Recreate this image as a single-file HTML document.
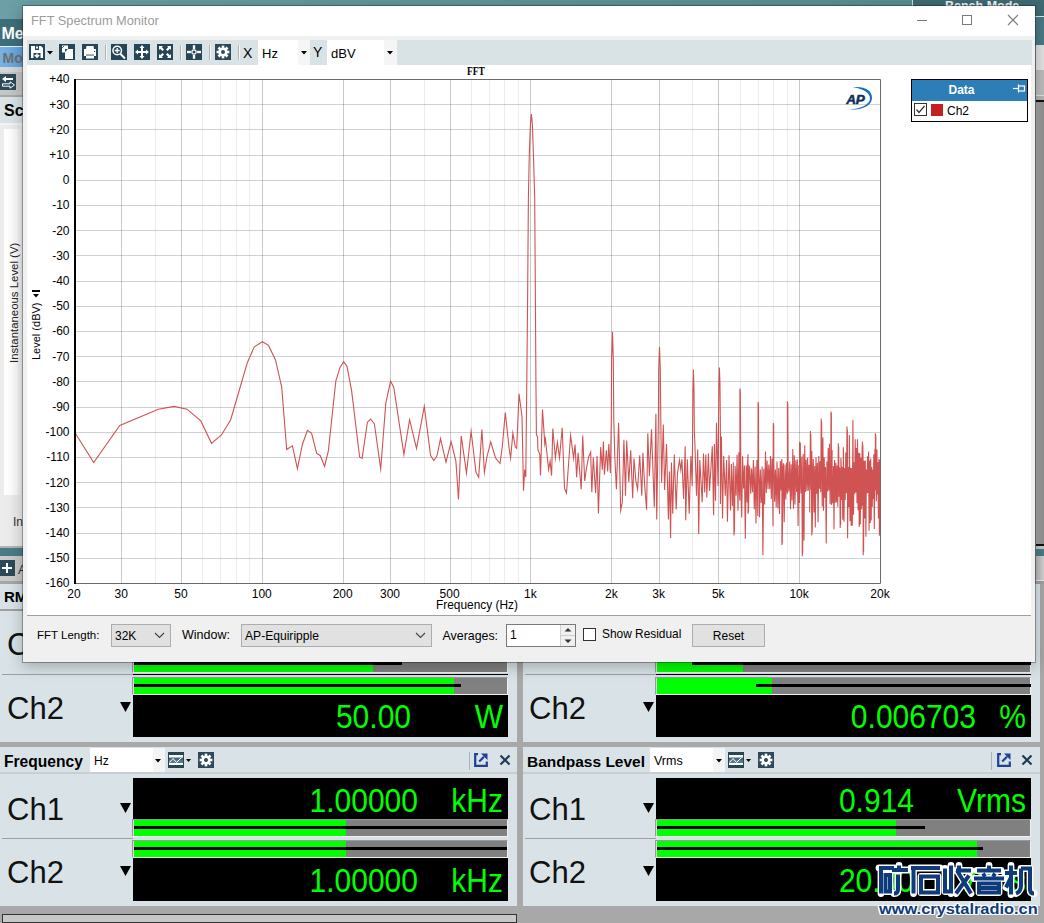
<!DOCTYPE html>
<html><head><meta charset="utf-8"><style>
html,body{margin:0;padding:0;width:1044px;height:923px;overflow:hidden;position:relative;background:#a0a0a0;font-family:"Liberation Sans",sans-serif}
div{box-sizing:border-box}
</style></head><body>
<div style="position:absolute;left:0px;top:0px;width:913px;height:19px;background:linear-gradient(90deg,#6c9fa6,#5f939b 60%,#5a8d95);"></div>
<div style="position:absolute;left:912px;top:0px;width:1px;height:19px;background:#cfe0e2;"></div>
<div style="position:absolute;left:913px;top:0px;width:131px;height:46px;background:#3f6b75;"></div>
<div style="position:absolute;left:945px;top:0.42px;font-family:'Liberation Sans',sans-serif;font-size:12.5px;line-height:12.5px;font-weight:700;color:#eef4f5;white-space:nowrap;">Bench Mode</div>
<div style="position:absolute;left:913px;top:16px;width:131px;height:1px;background:#dfeaec;"></div>
<div style="position:absolute;left:913px;top:17px;width:131px;height:29px;background:#4a7b86;"></div>
<div style="position:absolute;left:0px;top:19px;width:23px;height:27px;background:#3e6e7a;"></div>
<div style="position:absolute;left:1.5px;top:25.95px;font-family:'Liberation Sans',sans-serif;font-size:16px;line-height:16px;font-weight:700;color:#ffffff;white-space:nowrap;">Me</div>
<div style="position:absolute;left:0px;top:46px;width:23px;height:1px;background:#e8f0f4;"></div>
<div style="position:absolute;left:0px;top:47px;width:23px;height:20px;background:linear-gradient(90deg,#78b2e4,#62a2dc);"></div>
<div style="position:absolute;left:2.5px;top:50.65px;font-family:'Liberation Sans',sans-serif;font-size:14px;line-height:14px;font-weight:700;color:#6e6e6e;white-space:nowrap;">Mo</div>
<div style="position:absolute;left:0px;top:67px;width:23px;height:5px;background:#d7d7d7;"></div>
<div style="position:absolute;left:0px;top:72px;width:23px;height:23px;background:#c6c6c6;"></div>
<div style="position:absolute;left:0px;top:74px;width:16px;height:16px;background:#2d4a5a;"></div>
<svg style="position:absolute;left:0;top:74px" width="16" height="16"><path d="M2 5 L6 2 L6 4 L13 4 L13 6 L6 6 L6 8 Z" fill="#fff"/><path d="M14.5 11 L10 7.8 L10 9.8 L2.5 9.8 L2.5 12.2 L10 12.2 L10 14.2 Z" fill="#2d4a5a" stroke="#fff" stroke-width="1"/></svg>
<div style="position:absolute;left:0px;top:95px;width:23px;height:2px;background:#a9a9a9;"></div>
<div style="position:absolute;left:0px;top:97px;width:23px;height:26px;background:#d9e3e7;"></div>
<div style="position:absolute;left:4px;top:103.45px;font-family:'Liberation Sans',sans-serif;font-size:16px;line-height:16px;font-weight:700;color:#000;white-space:nowrap;">Sc</div>
<div style="position:absolute;left:0px;top:123px;width:23px;height:2px;background:#f4f4f4;"></div>
<div style="position:absolute;left:0px;top:125px;width:23px;height:421px;background:#ececec;"></div>
<div style="position:absolute;left:4px;top:129px;width:19px;height:366px;background:linear-gradient(90deg,#fff,#fafafa 70%,#e8e8e8);"></div>
<div style="position:absolute;left:8px;top:363px;transform:rotate(-90deg);transform-origin:0 0;font:400 11.4px/12px 'Liberation Sans',sans-serif;color:#222;white-space:nowrap">Instantaneous Level (V)</div>
<div style="position:absolute;left:13px;top:515.84px;font-family:'Liberation Sans',sans-serif;font-size:12px;line-height:12px;font-weight:400;color:#333;white-space:nowrap;">In</div>
<div style="position:absolute;left:0px;top:546px;width:23px;height:2px;background:#b4b4b4;"></div>
<div style="position:absolute;left:0px;top:548px;width:23px;height:8px;background:#4a7c87;"></div>
<div style="position:absolute;left:0px;top:556px;width:23px;height:25px;background:#cacaca;"></div>
<div style="position:absolute;left:0px;top:560px;width:15px;height:16px;background:#2d4a5a;"></div>
<svg style="position:absolute;left:0;top:560px" width="15" height="16"><path d="M7 3 V13 M2 8 H12" stroke="#fff" stroke-width="2"/></svg>
<div style="position:absolute;left:18px;top:562.99px;font-family:'Liberation Sans',sans-serif;font-size:13px;line-height:13px;font-weight:400;color:#333;white-space:nowrap;">A</div>
<div style="position:absolute;left:0px;top:581px;width:23px;height:3px;background:#a6a6a6;"></div>
<div style="position:absolute;left:0px;top:584px;width:23px;height:25px;background:#d9e3e7;"></div>
<div style="position:absolute;left:4px;top:588.90px;font-family:'Liberation Sans',sans-serif;font-size:15px;line-height:15px;font-weight:700;color:#000;white-space:nowrap;">RM</div>
<div style="position:absolute;left:0px;top:609px;width:23px;height:1px;background:#a0a0a0;"></div>
<div style="position:absolute;left:0px;top:611px;width:23px;height:131px;background:#d9e3e7;"></div>
<div style="position:absolute;left:1036px;top:45px;width:8px;height:25px;background:#e3e3e3;"></div>
<div style="position:absolute;left:1036px;top:70px;width:8px;height:25px;background:#bdbdbd;"></div>
<div style="position:absolute;left:1036px;top:95px;width:8px;height:1px;background:#d8e6ee;"></div>
<div style="position:absolute;left:1036px;top:96px;width:8px;height:4px;background:#b5b5b5;"></div>
<div style="position:absolute;left:1036px;top:100px;width:8px;height:2px;background:#111;"></div>
<div style="position:absolute;left:1036px;top:102px;width:8px;height:442px;background:linear-gradient(90deg,#a6a6a6,#8f8f8f);"></div>
<div style="position:absolute;left:1036px;top:544px;width:8px;height:1.5px;background:#111;"></div>
<div style="position:absolute;left:1036px;top:545.5px;width:8px;height:3.5px;background:#c8c8c8;"></div>
<div style="position:absolute;left:1036px;top:549px;width:8px;height:7px;background:#4a7c87;"></div>
<div style="position:absolute;left:1036px;top:556px;width:8px;height:24px;background:linear-gradient(90deg,#b8b8b8,#d4d4d4);"></div>
<div style="position:absolute;left:1036px;top:580px;width:8px;height:1px;background:#e4eef2;"></div>
<div style="position:absolute;left:1036px;top:581px;width:8px;height:3px;background:#a0a0a0;"></div>
<div style="position:absolute;left:0px;top:611px;width:517px;height:131px;background:#d9e3e7;"></div>
<div style="position:absolute;left:7px;top:629.25px;font-family:'Liberation Sans',sans-serif;font-size:31px;line-height:31px;font-weight:400;color:#111;white-space:nowrap;">Ch1</div>
<div style="position:absolute;left:517px;top:546px;width:6px;height:377px;background:#a8a8a8;"></div>
<div style="position:absolute;left:523px;top:584px;width:517px;height:158px;background:#d9e3e7;"></div>
<div style="position:absolute;left:1040px;top:584px;width:4px;height:339px;background:#a8a8a8;"></div>
<div style="position:absolute;left:0px;top:742px;width:1044px;height:5px;background:#a8a8a8;"></div>
<div style="position:absolute;left:132px;top:655px;width:376px;height:18px;background:#dcdcdc;border-top:1px solid #9a9a9a;border-left:1px solid #9a9a9a;border-right:1px solid #f0f0f0;border-bottom:1px solid #f0f0f0"></div>
<div style="position:absolute;left:134px;top:656px;width:373px;height:16px;background:#808080;"></div>
<div style="position:absolute;left:134px;top:656px;width:239px;height:16px;background:#00ff00;"></div>
<div style="position:absolute;left:134px;top:662px;width:268px;height:3px;background:#000;"></div>
<div style="position:absolute;left:2px;top:674px;width:131px;height:1px;background:#a0a0a0;"></div>
<div style="position:absolute;left:133px;top:674px;width:375px;height:1px;background:#000;"></div>
<div style="position:absolute;left:7px;top:693.25px;font-family:'Liberation Sans',sans-serif;font-size:31px;line-height:31px;font-weight:400;color:#111;white-space:nowrap;">Ch2</div>
<svg style="position:absolute;left:120px;top:702px" width="11" height="10"><path d="M0 0 H11 L5.5 10 Z" fill="#000"/></svg>
<div style="position:absolute;left:132px;top:677px;width:376px;height:18px;background:#dcdcdc;border-top:1px solid #9a9a9a;border-left:1px solid #9a9a9a;border-right:1px solid #f0f0f0;border-bottom:1px solid #f0f0f0"></div>
<div style="position:absolute;left:134px;top:678px;width:373px;height:16px;background:#808080;"></div>
<div style="position:absolute;left:134px;top:678px;width:320px;height:16px;background:#00ff00;"></div>
<div style="position:absolute;left:134px;top:684px;width:327px;height:3px;background:#000;"></div>
<div style="position:absolute;left:133px;top:695px;width:375px;height:42px;background:#000;"></div>
<div style="position:absolute;right:633px;top:703.60px;font-family:'Liberation Sans',sans-serif;font-size:30px;line-height:30px;font-weight:400;color:#00ff00;white-space:nowrap;transform:scaleY(1.11);transform-origin:0 100%">50.00</div>
<div style="position:absolute;right:541px;top:703.60px;font-family:'Liberation Sans',sans-serif;font-size:30px;line-height:30px;font-weight:400;color:#00ff00;white-space:nowrap;transform:scaleY(1.11);transform-origin:0 100%">W</div>
<div style="position:absolute;left:655px;top:655px;width:376px;height:18px;background:#dcdcdc;border-top:1px solid #9a9a9a;border-left:1px solid #9a9a9a;border-right:1px solid #f0f0f0;border-bottom:1px solid #f0f0f0"></div>
<div style="position:absolute;left:657px;top:656px;width:373px;height:16px;background:#808080;"></div>
<div style="position:absolute;left:657px;top:656px;width:86px;height:16px;background:#00ff00;"></div>
<div style="position:absolute;left:692px;top:662px;width:339px;height:3px;background:#000;"></div>
<div style="position:absolute;left:525px;top:674px;width:131px;height:1px;background:#a0a0a0;"></div>
<div style="position:absolute;left:656px;top:674px;width:375px;height:1px;background:#000;"></div>
<div style="position:absolute;left:529px;top:693.25px;font-family:'Liberation Sans',sans-serif;font-size:31px;line-height:31px;font-weight:400;color:#111;white-space:nowrap;">Ch2</div>
<svg style="position:absolute;left:643px;top:702px" width="11" height="10"><path d="M0 0 H11 L5.5 10 Z" fill="#000"/></svg>
<div style="position:absolute;left:655px;top:677px;width:376px;height:18px;background:#dcdcdc;border-top:1px solid #9a9a9a;border-left:1px solid #9a9a9a;border-right:1px solid #f0f0f0;border-bottom:1px solid #f0f0f0"></div>
<div style="position:absolute;left:657px;top:678px;width:373px;height:16px;background:#808080;"></div>
<div style="position:absolute;left:657px;top:678px;width:115px;height:16px;background:#00ff00;"></div>
<div style="position:absolute;left:756px;top:684px;width:275px;height:3px;background:#000;"></div>
<div style="position:absolute;left:656px;top:695px;width:375px;height:42px;background:#000;"></div>
<div style="position:absolute;right:68px;top:703.60px;font-family:'Liberation Sans',sans-serif;font-size:30px;line-height:30px;font-weight:400;color:#00ff00;white-space:nowrap;transform:scaleY(1.11);transform-origin:0 100%">0.006703</div>
<div style="position:absolute;right:18px;top:703.60px;font-family:'Liberation Sans',sans-serif;font-size:30px;line-height:30px;font-weight:400;color:#00ff00;white-space:nowrap;transform:scaleY(1.11);transform-origin:0 100%">%</div>
<div style="position:absolute;left:0px;top:747px;width:517px;height:159px;background:#d9e3e7;"></div>
<div style="position:absolute;left:0px;top:772px;width:517px;height:2px;background:#c8cfd3;"></div>
<div style="position:absolute;left:4px;top:753.59px;font-family:'Liberation Sans',sans-serif;font-size:15.6px;line-height:15.6px;font-weight:700;color:#000;white-space:nowrap;">Frequency</div>
<div style="position:absolute;left:90px;top:748px;width:75px;height:24px;background:#ffffff;"></div>
<div style="position:absolute;left:153px;top:748px;width:12px;height:24px;background:#f4f4f4;"></div>
<div style="position:absolute;left:94px;top:755.34px;font-family:'Liberation Sans',sans-serif;font-size:12px;line-height:12px;font-weight:400;color:#000;white-space:nowrap;">Hz</div>
<svg style="position:absolute;left:155px;top:759px" width="6" height="4"><path d="M0 0H6L3 3.5Z" fill="#000"/></svg>
<svg style="position:absolute;left:168px;top:752px" width="24" height="16"><rect x="0" y="0" width="16" height="16" fill="#264655"/><rect x="1" y="3" width="14" height="10" fill="#fff"/><rect x="1" y="5.5" width="14" height="2.5" fill="#4f5f94"/><rect x="1" y="8" width="14" height="3" fill="#4c7f86"/><path d="M1.5 10.5 L5 6.5 L8.5 10.5 L13.5 5.5" stroke="#fff" stroke-width="1" fill="none"/><path d="M18 7H23L20.5 10Z" fill="#000"/></svg>
<svg style="position:absolute;left:198px;top:752px" width="16" height="16" viewBox="0 0 16 16"><rect width="16" height="16" fill="#2d4a5a"/><g transform="translate(8 8)" fill="#fff"><circle r="4.6"/><g id="t"><rect x="-1.3" y="-6.4" width="2.6" height="3"/></g><rect x="-1.3" y="-6.4" width="2.6" height="3" transform="rotate(45)"/><rect x="-1.3" y="-6.4" width="2.6" height="3" transform="rotate(90)"/><rect x="-1.3" y="-6.4" width="2.6" height="3" transform="rotate(135)"/><rect x="-1.3" y="-6.4" width="2.6" height="3" transform="rotate(180)"/><rect x="-1.3" y="-6.4" width="2.6" height="3" transform="rotate(225)"/><rect x="-1.3" y="-6.4" width="2.6" height="3" transform="rotate(270)"/><rect x="-1.3" y="-6.4" width="2.6" height="3" transform="rotate(315)"/></g><circle cx="8" cy="8" r="2" fill="#2d4a5a"/></svg>
<div style="position:absolute;left:469px;top:752px;width:1px;height:18px;background:#a8b4ba;"></div>
<svg style="position:absolute;left:474px;top:753px" width="14" height="14"><path d="M4 1.2 H1.2 V12.8 H12.8 V8.5" stroke="#1e4192" stroke-width="2.2" fill="none"/><path d="M5.2 8.5 L10 3.7" stroke="#1e4192" stroke-width="2.2"/><path d="M7 0.5 H13.5 V7 Z" fill="#1e4192"/></svg>
<svg style="position:absolute;left:499px;top:754px" width="12" height="12"><path d="M1.5 1.5 L10.5 10.5 M10.5 1.5 L1.5 10.5" stroke="#1e3d55" stroke-width="2.2"/></svg>
<div style="position:absolute;left:7px;top:793.75px;font-family:'Liberation Sans',sans-serif;font-size:31px;line-height:31px;font-weight:400;color:#111;white-space:nowrap;">Ch1</div>
<svg style="position:absolute;left:120px;top:803px" width="11" height="10"><path d="M0 0 H11 L5.5 10 Z" fill="#000"/></svg>
<div style="position:absolute;left:133px;top:778px;width:375px;height:42px;background:#000;"></div>
<div style="position:absolute;right:626px;top:787.60px;font-family:'Liberation Sans',sans-serif;font-size:30px;line-height:30px;font-weight:400;color:#00ff00;white-space:nowrap;transform:scaleY(1.11);transform-origin:0 100%">1.00000</div>
<div style="position:absolute;right:541px;top:787.60px;font-family:'Liberation Sans',sans-serif;font-size:30px;line-height:30px;font-weight:400;color:#00ff00;white-space:nowrap;transform:scaleY(1.11);transform-origin:0 100%">kHz</div>
<div style="position:absolute;left:132px;top:819px;width:376px;height:18px;background:#dcdcdc;border-top:1px solid #9a9a9a;border-left:1px solid #9a9a9a;border-right:1px solid #f0f0f0;border-bottom:1px solid #f0f0f0"></div>
<div style="position:absolute;left:134px;top:820px;width:373px;height:16px;background:#808080;"></div>
<div style="position:absolute;left:134px;top:820px;width:212px;height:16px;background:#00ff00;"></div>
<div style="position:absolute;left:134px;top:826px;width:373px;height:3px;background:#000;"></div>
<div style="position:absolute;left:2px;top:838px;width:131px;height:1px;background:#a0a0a0;"></div>
<div style="position:absolute;left:7px;top:857.25px;font-family:'Liberation Sans',sans-serif;font-size:31px;line-height:31px;font-weight:400;color:#111;white-space:nowrap;">Ch2</div>
<svg style="position:absolute;left:120px;top:866px" width="11" height="10"><path d="M0 0 H11 L5.5 10 Z" fill="#000"/></svg>
<div style="position:absolute;left:132px;top:840px;width:376px;height:18px;background:#dcdcdc;border-top:1px solid #9a9a9a;border-left:1px solid #9a9a9a;border-right:1px solid #f0f0f0;border-bottom:1px solid #f0f0f0"></div>
<div style="position:absolute;left:134px;top:841px;width:373px;height:16px;background:#808080;"></div>
<div style="position:absolute;left:134px;top:841px;width:212px;height:16px;background:#00ff00;"></div>
<div style="position:absolute;left:134px;top:847px;width:373px;height:3px;background:#000;"></div>
<div style="position:absolute;left:133px;top:858px;width:375px;height:43px;background:#000;"></div>
<div style="position:absolute;right:626px;top:867.60px;font-family:'Liberation Sans',sans-serif;font-size:30px;line-height:30px;font-weight:400;color:#00ff00;white-space:nowrap;transform:scaleY(1.11);transform-origin:0 100%">1.00000</div>
<div style="position:absolute;right:541px;top:867.60px;font-family:'Liberation Sans',sans-serif;font-size:30px;line-height:30px;font-weight:400;color:#00ff00;white-space:nowrap;transform:scaleY(1.11);transform-origin:0 100%">kHz</div>
<div style="position:absolute;left:523px;top:747px;width:517px;height:159px;background:#d9e3e7;"></div>
<div style="position:absolute;left:523px;top:772px;width:517px;height:2px;background:#c8cfd3;"></div>
<div style="position:absolute;left:527px;top:753.68px;font-family:'Liberation Sans',sans-serif;font-size:15.5px;line-height:15.5px;font-weight:700;color:#000;white-space:nowrap;">Bandpass Level</div>
<div style="position:absolute;left:650px;top:748px;width:75px;height:24px;background:#ffffff;"></div>
<div style="position:absolute;left:713px;top:748px;width:12px;height:24px;background:#f4f4f4;"></div>
<div style="position:absolute;left:654px;top:754.92px;font-family:'Liberation Sans',sans-serif;font-size:12.5px;line-height:12.5px;font-weight:400;color:#000;white-space:nowrap;">Vrms</div>
<svg style="position:absolute;left:716px;top:759px" width="6" height="4"><path d="M0 0H6L3 3.5Z" fill="#000"/></svg>
<svg style="position:absolute;left:728px;top:752px" width="24" height="16"><rect x="0" y="0" width="16" height="16" fill="#264655"/><rect x="1" y="3" width="14" height="10" fill="#fff"/><rect x="1" y="5.5" width="14" height="2.5" fill="#4f5f94"/><rect x="1" y="8" width="14" height="3" fill="#4c7f86"/><path d="M1.5 10.5 L5 6.5 L8.5 10.5 L13.5 5.5" stroke="#fff" stroke-width="1" fill="none"/><path d="M18 7H23L20.5 10Z" fill="#000"/></svg>
<svg style="position:absolute;left:758px;top:752px" width="16" height="16" viewBox="0 0 16 16"><rect width="16" height="16" fill="#2d4a5a"/><g transform="translate(8 8)" fill="#fff"><circle r="4.6"/><g id="t"><rect x="-1.3" y="-6.4" width="2.6" height="3"/></g><rect x="-1.3" y="-6.4" width="2.6" height="3" transform="rotate(45)"/><rect x="-1.3" y="-6.4" width="2.6" height="3" transform="rotate(90)"/><rect x="-1.3" y="-6.4" width="2.6" height="3" transform="rotate(135)"/><rect x="-1.3" y="-6.4" width="2.6" height="3" transform="rotate(180)"/><rect x="-1.3" y="-6.4" width="2.6" height="3" transform="rotate(225)"/><rect x="-1.3" y="-6.4" width="2.6" height="3" transform="rotate(270)"/><rect x="-1.3" y="-6.4" width="2.6" height="3" transform="rotate(315)"/></g><circle cx="8" cy="8" r="2" fill="#2d4a5a"/></svg>
<div style="position:absolute;left:991px;top:752px;width:1px;height:18px;background:#a8b4ba;"></div>
<svg style="position:absolute;left:997px;top:753px" width="14" height="14"><path d="M4 1.2 H1.2 V12.8 H12.8 V8.5" stroke="#1e4192" stroke-width="2.2" fill="none"/><path d="M5.2 8.5 L10 3.7" stroke="#1e4192" stroke-width="2.2"/><path d="M7 0.5 H13.5 V7 Z" fill="#1e4192"/></svg>
<svg style="position:absolute;left:1021px;top:754px" width="12" height="12"><path d="M1.5 1.5 L10.5 10.5 M10.5 1.5 L1.5 10.5" stroke="#1e3d55" stroke-width="2.2"/></svg>
<div style="position:absolute;left:529px;top:793.75px;font-family:'Liberation Sans',sans-serif;font-size:31px;line-height:31px;font-weight:400;color:#111;white-space:nowrap;">Ch1</div>
<svg style="position:absolute;left:643px;top:803px" width="11" height="10"><path d="M0 0 H11 L5.5 10 Z" fill="#000"/></svg>
<div style="position:absolute;left:656px;top:778px;width:375px;height:42px;background:#000;"></div>
<div style="position:absolute;right:130px;top:787.60px;font-family:'Liberation Sans',sans-serif;font-size:30px;line-height:30px;font-weight:400;color:#00ff00;white-space:nowrap;transform:scaleY(1.11);transform-origin:0 100%">0.914</div>
<div style="position:absolute;right:18px;top:787.60px;font-family:'Liberation Sans',sans-serif;font-size:30px;line-height:30px;font-weight:400;color:#00ff00;white-space:nowrap;transform:scaleY(1.11);transform-origin:0 100%">Vrms</div>
<div style="position:absolute;left:655px;top:819px;width:376px;height:18px;background:#dcdcdc;border-top:1px solid #9a9a9a;border-left:1px solid #9a9a9a;border-right:1px solid #f0f0f0;border-bottom:1px solid #f0f0f0"></div>
<div style="position:absolute;left:657px;top:820px;width:373px;height:16px;background:#808080;"></div>
<div style="position:absolute;left:657px;top:820px;width:239px;height:16px;background:#00ff00;"></div>
<div style="position:absolute;left:657px;top:826px;width:268px;height:3px;background:#000;"></div>
<div style="position:absolute;left:525px;top:838px;width:131px;height:1px;background:#a0a0a0;"></div>
<div style="position:absolute;left:529px;top:857.25px;font-family:'Liberation Sans',sans-serif;font-size:31px;line-height:31px;font-weight:400;color:#111;white-space:nowrap;">Ch2</div>
<svg style="position:absolute;left:643px;top:866px" width="11" height="10"><path d="M0 0 H11 L5.5 10 Z" fill="#000"/></svg>
<div style="position:absolute;left:655px;top:840px;width:376px;height:18px;background:#dcdcdc;border-top:1px solid #9a9a9a;border-left:1px solid #9a9a9a;border-right:1px solid #f0f0f0;border-bottom:1px solid #f0f0f0"></div>
<div style="position:absolute;left:657px;top:841px;width:373px;height:16px;background:#808080;"></div>
<div style="position:absolute;left:657px;top:841px;width:320px;height:16px;background:#00ff00;"></div>
<div style="position:absolute;left:657px;top:847px;width:326px;height:3px;background:#000;"></div>
<div style="position:absolute;left:656px;top:858px;width:375px;height:43px;background:#000;"></div>
<div style="position:absolute;right:130px;top:867.60px;font-family:'Liberation Sans',sans-serif;font-size:30px;line-height:30px;font-weight:400;color:#00ff00;white-space:nowrap;transform:scaleY(1.11);transform-origin:0 100%">20.00</div>
<div style="position:absolute;right:18px;top:867.60px;font-family:'Liberation Sans',sans-serif;font-size:30px;line-height:30px;font-weight:400;color:#00ff00;white-space:nowrap;transform:scaleY(1.11);transform-origin:0 100%">Vrms</div>
<div style="position:absolute;left:0px;top:906px;width:1044px;height:17px;background:#a8a8a8;"></div>
<div style="position:absolute;left:2px;top:914px;width:515px;height:9px;background:#c8c8c8;border:1px solid #333"></div>
<div style="position:absolute;left:22px;top:5px;width:1014px;height:658px;background:#f0f0f0;border:1px solid rgba(0,0,0,0.3);background-clip:padding-box;box-shadow:0 4px 14px rgba(0,0,0,0.25)"></div>
<div style="position:absolute;left:23px;top:6px;width:1012px;height:30px;background:#ffffff;"></div>
<div style="position:absolute;left:31px;top:15.16px;font-family:'Liberation Sans',sans-serif;font-size:12.8px;line-height:12.8px;font-weight:400;color:#9c9c9c;white-space:nowrap;">FFT Spectrum Monitor</div>
<div style="position:absolute;left:917px;top:20px;width:10px;height:1px;background:#7a7a7a;"></div>
<div style="position:absolute;left:962px;top:15px;width:10px;height:10px;background:transparent;border:1px solid #7a7a7a"></div>
<svg style="position:absolute;left:1007px;top:14px" width="12" height="12"><path d="M1 1 L11 11 M11 1 L1 11" stroke="#7a7a7a" stroke-width="1.1"/></svg>
<div style="position:absolute;left:27px;top:40px;width:1005px;height:25px;background:#d9e3e6;"></div>
<svg style="position:absolute;left:29px;top:44px" width="16" height="16" viewBox="0 0 16 16"><rect width="16" height="16" fill="#264655"/><path d="M2 2 H12 L14 4 V14 H2 Z" fill="#fff"/><rect x="6" y="2" width="4" height="4" fill="#264655"/><rect x="7" y="2.5" width="2" height="2" fill="#fff"/><rect x="4.5" y="9" width="7" height="5" fill="#264655"/><path d="M8 9.5 V13.2 M5.8 11 L8 13.2 L10.2 11" stroke="#fff" stroke-width="1.5" fill="none"/></svg>
<svg style="position:absolute;left:47px;top:51px" width="6" height="4"><path d="M0 0H6L3 3.5Z" fill="#000"/></svg>
<svg style="position:absolute;left:59px;top:44px" width="16" height="16" viewBox="0 0 16 16"><rect width="16" height="16" fill="#264655"/><path d="M3 1.5 H9 V5 L5.5 8.5 H3 Z" fill="#fff"/><path d="M6 5 H14 V15 H6 Z" fill="#fff"/><path d="M6 5 L9 5 L6 8 Z" fill="#264655"/><path d="M3 4 L5 2" stroke="#264655" stroke-width="0.8"/></svg>
<svg style="position:absolute;left:82px;top:44px" width="16" height="16" viewBox="0 0 16 16"><rect width="16" height="16" fill="#264655"/><path d="M4.5 2 H11.5 L12 5 H4 Z" fill="#fff"/><rect x="2" y="5" width="12" height="7" fill="#fff"/><rect x="4" y="10.6" width="8" height="1.1" fill="#264655"/><rect x="4" y="11.7" width="8" height="2.8" fill="#fff"/><rect x="12" y="7" width="1.2" height="1" fill="#264655"/></svg>
<div style="position:absolute;left:105px;top:45px;width:1px;height:15px;background:#b4b4b4;"></div>
<div style="position:absolute;left:106px;top:45px;width:1px;height:15px;background:#f4f7f8;"></div>
<svg style="position:absolute;left:111px;top:44px" width="16" height="16" viewBox="0 0 16 16"><rect width="16" height="16" fill="#264655"/><circle cx="6.2" cy="6.5" r="4.3" stroke="#fff" stroke-width="1.5" fill="none"/><path d="M6.2 4 V9 M3.7 6.5 H8.7" stroke="#fff" stroke-width="1.3"/><path d="M9.5 10 L14 14.5" stroke="#fff" stroke-width="2"/></svg>
<svg style="position:absolute;left:134px;top:44px" width="16" height="16" viewBox="0 0 16 16"><rect width="16" height="16" fill="#264655"/><path d="M8 1 L10.5 4 H9 V7 H12 V5.5 L15 8 L12 10.5 V9 H9 V12 H10.5 L8 15 L5.5 12 H7 V9 H4 V10.5 L1 8 L4 5.5 V7 H7 V4 H5.5 Z" fill="#fff"/></svg>
<svg style="position:absolute;left:157px;top:44px" width="16" height="16" viewBox="0 0 16 16"><rect width="16" height="16" fill="#264655"/><path d="M2 2 H6 L4.8 3.2 L7 5.4 L5.4 7 L3.2 4.8 L2 6 Z" fill="#fff"/><path d="M14 2 V6 L12.8 4.8 L10.6 7 L9 5.4 L11.2 3.2 L10 2 Z" fill="#fff"/><path d="M2 14 V10 L3.2 11.2 L5.4 9 L7 10.6 L4.8 12.8 L6 14 Z" fill="#fff"/><path d="M14 14 H10 L11.2 12.8 L9 10.6 L10.6 9 L12.8 11.2 L14 10 Z" fill="#fff"/></svg>
<div style="position:absolute;left:180px;top:45px;width:1px;height:15px;background:#b4b4b4;"></div>
<div style="position:absolute;left:181px;top:45px;width:1px;height:15px;background:#f4f7f8;"></div>
<svg style="position:absolute;left:186px;top:44px" width="16" height="16" viewBox="0 0 16 16"><rect width="16" height="16" fill="#264655"/><rect x="6.8" y="1.2" width="2.4" height="3.8" fill="#fff"/><rect x="6.8" y="11" width="2.4" height="3.8" fill="#fff"/><rect x="1" y="6.8" width="3.9" height="2.4" fill="#fff"/><rect x="11.1" y="6.8" width="3.9" height="2.4" fill="#fff"/><circle cx="8" cy="8" r="2.1" stroke="#fff" stroke-width="1.2" fill="#264655"/></svg>
<div style="position:absolute;left:209px;top:45px;width:1px;height:15px;background:#b4b4b4;"></div>
<div style="position:absolute;left:210px;top:45px;width:1px;height:15px;background:#f4f7f8;"></div>
<svg style="position:absolute;left:215px;top:44px" width="16" height="16" viewBox="0 0 16 16"><rect width="16" height="16" fill="#2d4a5a"/><g transform="translate(8 8)" fill="#fff"><circle r="4.6"/><g id="t"><rect x="-1.3" y="-6.4" width="2.6" height="3"/></g><rect x="-1.3" y="-6.4" width="2.6" height="3" transform="rotate(45)"/><rect x="-1.3" y="-6.4" width="2.6" height="3" transform="rotate(90)"/><rect x="-1.3" y="-6.4" width="2.6" height="3" transform="rotate(135)"/><rect x="-1.3" y="-6.4" width="2.6" height="3" transform="rotate(180)"/><rect x="-1.3" y="-6.4" width="2.6" height="3" transform="rotate(225)"/><rect x="-1.3" y="-6.4" width="2.6" height="3" transform="rotate(270)"/><rect x="-1.3" y="-6.4" width="2.6" height="3" transform="rotate(315)"/></g><circle cx="8" cy="8" r="2" fill="#2d4a5a"/></svg>
<div style="position:absolute;left:238px;top:45px;width:1px;height:15px;background:#b4b4b4;"></div>
<div style="position:absolute;left:239px;top:45px;width:1px;height:15px;background:#f4f7f8;"></div>
<div style="position:absolute;left:243px;top:46.15px;font-family:'Liberation Sans',sans-serif;font-size:14px;line-height:14px;font-weight:400;color:#000;white-space:nowrap;">X</div>
<div style="position:absolute;left:258px;top:40px;width:52px;height:25px;background:#ffffff;"></div>
<div style="position:absolute;left:298px;top:40px;width:12px;height:25px;background:#f5f5f5;"></div>
<div style="position:absolute;left:262px;top:46.99px;font-family:'Liberation Sans',sans-serif;font-size:13px;line-height:13px;font-weight:400;color:#000;white-space:nowrap;">Hz</div>
<svg style="position:absolute;left:301px;top:51px" width="6" height="4"><path d="M0 0H6L3 3.5Z" fill="#000"/></svg>
<div style="position:absolute;left:313px;top:45.15px;font-family:'Liberation Sans',sans-serif;font-size:14px;line-height:14px;font-weight:400;color:#000;white-space:nowrap;">Y</div>
<div style="position:absolute;left:327px;top:40px;width:70px;height:25px;background:#ffffff;"></div>
<div style="position:absolute;left:384px;top:40px;width:13px;height:25px;background:#f5f5f5;"></div>
<div style="position:absolute;left:331px;top:46.99px;font-family:'Liberation Sans',sans-serif;font-size:13px;line-height:13px;font-weight:400;color:#000;white-space:nowrap;">dBV</div>
<svg style="position:absolute;left:387px;top:51px" width="6" height="4"><path d="M0 0H6L3 3.5Z" fill="#000"/></svg>
<div style="position:absolute;left:27px;top:65px;width:1004px;height:550px;background:#ffffff;"></div>
<div style="position:absolute;left:27px;top:615px;width:1004px;height:1px;background:#a0a0a0;"></div>
<svg style="position:absolute;left:0;top:0" width="1044" height="923"><path d="M74 104.5H880" stroke="rgba(0,0,0,0.18)" stroke-width="1"/><path d="M74 129.5H880" stroke="rgba(0,0,0,0.18)" stroke-width="1"/><path d="M74 155.5H880" stroke="rgba(0,0,0,0.18)" stroke-width="1"/><path d="M74 180.5H880" stroke="rgba(0,0,0,0.18)" stroke-width="1"/><path d="M74 205.5H880" stroke="rgba(0,0,0,0.18)" stroke-width="1"/><path d="M74 230.5H880" stroke="rgba(0,0,0,0.18)" stroke-width="1"/><path d="M74 255.5H880" stroke="rgba(0,0,0,0.18)" stroke-width="1"/><path d="M74 281.5H880" stroke="rgba(0,0,0,0.18)" stroke-width="1"/><path d="M74 306.5H880" stroke="rgba(0,0,0,0.18)" stroke-width="1"/><path d="M74 331.5H880" stroke="rgba(0,0,0,0.18)" stroke-width="1"/><path d="M74 356.5H880" stroke="rgba(0,0,0,0.18)" stroke-width="1"/><path d="M74 381.5H880" stroke="rgba(0,0,0,0.18)" stroke-width="1"/><path d="M74 407.5H880" stroke="rgba(0,0,0,0.18)" stroke-width="1"/><path d="M74 432.5H880" stroke="rgba(0,0,0,0.18)" stroke-width="1"/><path d="M74 457.5H880" stroke="rgba(0,0,0,0.18)" stroke-width="1"/><path d="M74 482.5H880" stroke="rgba(0,0,0,0.18)" stroke-width="1"/><path d="M74 507.5H880" stroke="rgba(0,0,0,0.18)" stroke-width="1"/><path d="M74 533.5H880" stroke="rgba(0,0,0,0.18)" stroke-width="1"/><path d="M74 558.5H880" stroke="rgba(0,0,0,0.18)" stroke-width="1"/><path d="M155.5 79V583" stroke="rgba(0,0,0,0.07)" stroke-width="1"/><path d="M202.5 79V583" stroke="rgba(0,0,0,0.07)" stroke-width="1"/><path d="M220.5 79V583" stroke="rgba(0,0,0,0.07)" stroke-width="1"/><path d="M236.5 79V583" stroke="rgba(0,0,0,0.07)" stroke-width="1"/><path d="M249.5 79V583" stroke="rgba(0,0,0,0.07)" stroke-width="1"/><path d="M424.5 79V583" stroke="rgba(0,0,0,0.07)" stroke-width="1"/><path d="M471.5 79V583" stroke="rgba(0,0,0,0.07)" stroke-width="1"/><path d="M489.5 79V583" stroke="rgba(0,0,0,0.07)" stroke-width="1"/><path d="M504.5 79V583" stroke="rgba(0,0,0,0.07)" stroke-width="1"/><path d="M518.5 79V583" stroke="rgba(0,0,0,0.07)" stroke-width="1"/><path d="M692.5 79V583" stroke="rgba(0,0,0,0.07)" stroke-width="1"/><path d="M740.5 79V583" stroke="rgba(0,0,0,0.07)" stroke-width="1"/><path d="M758.5 79V583" stroke="rgba(0,0,0,0.07)" stroke-width="1"/><path d="M773.5 79V583" stroke="rgba(0,0,0,0.07)" stroke-width="1"/><path d="M787.5 79V583" stroke="rgba(0,0,0,0.07)" stroke-width="1"/><path d="M121.5 79V583" stroke="rgba(0,0,0,0.21)" stroke-width="1"/><path d="M181.5 79V583" stroke="rgba(0,0,0,0.21)" stroke-width="1"/><path d="M262.5 79V583" stroke="rgba(0,0,0,0.21)" stroke-width="1"/><path d="M343.5 79V583" stroke="rgba(0,0,0,0.21)" stroke-width="1"/><path d="M390.5 79V583" stroke="rgba(0,0,0,0.21)" stroke-width="1"/><path d="M450.5 79V583" stroke="rgba(0,0,0,0.21)" stroke-width="1"/><path d="M530.5 79V583" stroke="rgba(0,0,0,0.21)" stroke-width="1"/><path d="M611.5 79V583" stroke="rgba(0,0,0,0.21)" stroke-width="1"/><path d="M659.5 79V583" stroke="rgba(0,0,0,0.21)" stroke-width="1"/><path d="M718.5 79V583" stroke="rgba(0,0,0,0.21)" stroke-width="1"/><path d="M799.5 79V583" stroke="rgba(0,0,0,0.21)" stroke-width="1"/></svg>
<svg style="position:absolute;left:0;top:0" width="1044" height="923"><defs><clipPath id="pc"><rect x="74" y="79" width="806" height="504"/></clipPath></defs><path clip-path="url(#pc)" d="M74.5 432.0 L93.7 462.5 L119.8 425.4 L158.4 409.2 L174.1 406.4 L187.0 409.2 L200.8 420.9 L211.5 443.3 L221.4 435.0 L230.6 420.0 L247.3 362.8 L254.3 346.9 L262.3 341.7 L268.5 345.4 L275.5 359.9 L281.7 387.2 L286.7 449.5 L292.4 445.8 L297.4 468.7 L302.4 444.5 L307.4 430.3 L311.6 433.3 L316.6 453.2 L320.3 455.7 L324.6 466.4 L328.4 450.6 L335.8 381.1 L340.0 367.4 L343.6 361.7 L347.0 366.3 L351.6 390.6 L359.6 457.0 L362.1 458.4 L367.4 422.2 L370.6 419.0 L374.4 423.9 L380.7 469.0 L385.8 403.2 L390.6 381.1 L393.8 387.4 L403.9 454.4 L409.6 419.7 L416.5 448.5 L424.3 406.4 L430.6 455.5 L433.8 460.5 L437.0 455.9 L440.5 438.6 L446.0 462.2 L451.1 441.6 L455.9 461.2 L458.5 499.5 L461.2 435.9 L466.5 473.2 L471.1 431.3 L476.0 472.3 L478.7 477.4 L481.9 429.6 L484.4 472.3 L486.9 457.0 L490.7 441.8 L495.6 458.0 L500.0 463.5 L502.3 446.8 L505.3 412.6 L509.1 448.3 L510.6 458.1 L512.9 433.1 L515.2 446.8 L516.7 448.3 L519.0 393.7 L522.0 416.4 L523.5 490.8 L524.7 469.5 L525.8 477.1 L526.6 400.0 L527.6 300.0 L528.4 197.5 L529.3 154.2 L530.4 125.0 L531.4 114.1 L532.4 125.0 L533.4 154.2 L534.7 197.5 L535.4 300.0 L535.9 380.0 L536.4 434.6 L537.6 436.9 L537.9 449.8 L539.8 454.4 L540.5 475.6 L542.5 409.6 L544.8 443.7 L545.5 439.2 L548.6 469.5 L550.1 461.2 L551.6 475.6 L552.8 428.6 L555.4 458.1 L557.4 442.2 L559.5 458.1 L562.2 427.8 L564.5 488.5 L566.5 493.0 L570.6 435.4 L573.6 458.1 L575.1 444.5 L576.6 477.1 L578.1 452.8 L581.2 489.3 L582.7 435.4 L584.7 480.9 L586.5 468.0 L588.5 457.4 L590.7 452.1 L591.8 492.3 L593.3 457.4 L595.6 493.0 L597.1 455.9 L598.4 513.6 L600.7 447.1 L602.3 469.8 L603.4 441.4 L604.4 474.7 L606.4 450.3 L607.7 471.5 L608.8 443.9 L610.4 473.1 L611.3 420.0 L611.6 360.0 L612.5 332.0 L613.3 360.0 L613.8 420.0 L614.8 456.8 L616.4 489.3 L618.6 422.7 L620.7 510.4 L622.3 502.3 L623.9 439.8 L625.5 495.8 L626.7 440.6 L628.8 482.0 L630.7 450.3 L632.7 498.3 L634.0 458.5 L635.9 481.2 L637.6 489.3 L639.7 455.2 L641.8 495.8 L642.9 452.8 L644.5 482.8 L646.6 509.6 L647.8 433.3 L649.4 476.3 L651.5 429.2 L654.3 507.2 L655.9 413.8 L656.7 519.4 L658.4 420.0 L658.7 370.0 L659.5 347.0 L660.3 370.0 L660.8 420.0 L661.6 482.8 L663.3 424.4 L664.6 490.0 L666.5 443.9 L668.4 519.4 L669.4 471.5 L670.6 538.0 L671.4 462.5 L672.7 513.7 L674.3 454.4 L676.2 509.6 L677.5 473.1 L679.5 460.1 L680.8 469.8 L681.9 459.3 L683.6 499.1 L685.2 446.3 L685.7 520.2 L687.3 459.3 L689.2 513.7 L690.9 456.0 L692.2 486.1 L692.6 430.0 L692.9 390.0 L693.4 369.5 L694.0 390.0 L694.3 430.0 L694.9 443.9 L696.5 495.8 L697.7 449.5 L698.7 534.0 L699.8 460.1 L702.2 502.3 L703.5 453.6 L704.7 492.6 L705.8 454.4 L706.8 497.4 L708.4 453.6 L709.5 491.0 L712.3 446.3 L713.6 515.3 L714.4 443.9 L715.5 500.7 L716.5 422.7 L718.1 486.1 L718.6 420.0 L718.9 385.0 L719.4 367.4 L720.0 385.0 L720.4 430.0 L720.4 504.0 L721.4 436.5 L722.5 518.6 L723.7 456.0 L725.3 495.8 L726.6 460.1 L727.4 521.8 L729.0 455.2 L730.5 510.5 L731.4 464.1 L732.4 506.0 L733.3 466.1 L733.3 462.3 L734.0 535.4 L734.3 512.8 L734.4 532.4 L735.1 466.1 L735.2 468.2 L736.1 495.8 L737.1 454.7 L738.0 510.8 L738.9 452.2 L739.2 486.2 L739.9 500.6 L739.9 388.6 L740.3 391.6 L740.8 462.9 L741.0 486.2 L741.7 517.4 L742.6 456.2 L743.5 488.5 L744.4 465.6 L745.3 538.7 L746.2 465.4 L747.1 502.5 L747.4 466.4 L748.0 454.2 L748.1 513.8 L748.5 510.8 L748.9 488.5 L749.2 466.4 L749.8 467.3 L750.7 493.7 L751.6 468.5 L752.5 492.3 L753.4 460.1 L754.3 509.2 L755.1 466.5 L756.0 523.5 L756.9 460.0 L757.4 486.6 L757.8 516.0 L758.1 402.1 L758.5 405.1 L758.6 467.1 L759.2 486.6 L759.5 517.2 L760.3 469.4 L761.2 503.0 L762.1 466.5 L762.9 555.2 L763.8 468.8 L764.6 504.5 L765.5 451.6 L766.3 493.1 L767.1 460.6 L768.0 489.1 L768.8 464.5 L769.7 489.3 L770.5 455.9 L771.3 499.0 L772.1 458.5 L772.6 486.9 L773.0 526.3 L773.3 423.0 L773.7 426.0 L773.8 462.7 L774.4 486.9 L774.6 501.7 L775.4 469.6 L776.2 507.3 L777.0 461.4 L777.9 508.4 L778.7 467.9 L779.5 514.0 L780.3 461.1 L781.1 490.5 L781.2 467.0 L781.9 459.0 L781.9 545.0 L782.3 542.0 L782.7 503.7 L783.0 467.0 L783.4 463.3 L784.2 522.2 L785.0 464.5 L785.8 499.4 L786.6 462.8 L786.7 487.2 L787.4 493.7 L787.4 401.3 L787.8 404.3 L788.1 466.9 L788.5 487.2 L788.9 491.6 L789.7 461.5 L790.5 509.3 L791.2 464.3 L792.0 500.4 L792.8 448.9 L793.5 508.7 L794.3 455.3 L795.0 504.5 L795.8 460.2 L796.6 491.9 L797.3 459.2 L798.1 525.9 L798.8 465.3 L798.9 487.4 L799.5 502.9 L799.6 442.0 L800.0 445.0 L800.3 442.6 L800.7 487.4 L801.0 493.4 L801.6 467.4 L801.8 456.4 L802.3 556.3 L802.5 506.9 L802.7 553.3 L803.2 454.1 L803.4 467.4 L804.0 540.5 L804.7 445.2 L805.4 492.1 L806.1 459.5 L806.9 491.0 L807.6 457.6 L808.3 490.8 L809.0 464.8 L809.7 487.6 L809.7 512.5 L810.4 431.0 L810.4 460.1 L810.8 434.0 L811.1 467.6 L811.1 489.7 L811.5 487.6 L811.8 535.4 L811.8 451.0 L812.2 532.4 L812.6 504.9 L812.9 467.6 L813.3 458.9 L814.0 512.6 L814.7 466.0 L815.3 527.4 L816.0 457.3 L816.7 493.8 L817.4 462.7 L818.1 522.3 L818.8 455.9 L819.5 488.7 L820.2 461.0 L820.5 487.8 L820.8 492.2 L821.2 418.4 L821.5 436.6 L821.6 421.4 L822.2 506.4 L822.3 487.8 L822.9 437.4 L823.5 510.8 L824.2 457.2 L824.9 497.9 L825.5 467.1 L826.2 543.5 L826.9 461.5 L827.5 491.4 L828.2 448.0 L828.8 490.8 L829.5 443.7 L830.1 504.1 L830.3 488.0 L830.8 463.5 L831.0 411.6 L831.4 414.6 L831.4 504.9 L832.1 449.9 L832.1 488.0 L832.7 503.5 L833.4 466.0 L834.0 529.3 L834.6 460.1 L835.3 502.7 L835.9 462.7 L836.6 502.2 L837.2 465.6 L837.6 488.2 L837.8 506.7 L838.3 443.3 L838.4 469.2 L838.7 446.3 L839.1 496.7 L839.4 488.2 L839.5 468.2 L839.7 468.7 L840.2 528.1 L840.3 498.8 L840.6 525.1 L840.9 458.0 L841.3 468.2 L841.5 500.0 L842.2 467.1 L842.8 519.7 L843.4 447.3 L844.0 521.8 L844.6 467.9 L845.2 500.1 L845.8 452.6 L846.3 488.3 L846.4 493.3 L847.0 426.5 L847.0 467.5 L847.4 429.5 L847.6 538.3 L848.1 488.3 L848.2 467.0 L848.8 507.0 L849.4 435.0 L850.0 521.2 L850.6 467.8 L851.2 525.7 L851.8 468.0 L852.3 525.8 L852.9 419.8 L853.5 514.8 L854.1 462.2 L854.7 493.7 L855.2 439.3 L855.8 492.6 L856.4 447.9 L857.0 503.2 L857.5 439.3 L858.1 510.3 L858.7 452.8 L859.2 527.0 L859.8 453.3 L860.3 524.6 L860.9 457.8 L861.5 509.2 L861.7 488.7 L862.0 456.2 L862.4 441.4 L862.5 468.7 L862.6 505.7 L862.8 444.4 L863.1 460.5 L863.2 555.2 L863.5 488.7 L863.6 552.2 L863.7 517.0 L864.2 460.7 L864.3 468.7 L864.8 518.4 L865.3 460.6 L865.9 536.8 L866.4 469.5 L866.9 493.2 L867.5 456.3 L868.0 493.0 L868.6 451.4 L869.1 530.7 L869.6 460.5 L870.2 523.0 L870.7 458.4 L871.2 520.6 L871.7 467.1 L872.3 506.7 L872.8 469.6 L873.3 498.9 L873.8 454.3 L874.3 529.1 L874.7 488.9 L874.9 448.8 L875.4 490.5 L875.4 433.3 L875.8 436.3 L875.9 468.7 L876.4 501.3 L876.5 488.9 L876.9 449.6 L877.4 494.5 L877.9 462.2 L878.4 518.4 L878.9 458.7 L879.4 535.8 L879.9 459.7 L880.4 506.4 L880.9 451.3" stroke="#cd4a4a" stroke-width="1.1" fill="none" stroke-linejoin="miter" stroke-miterlimit="10" opacity="0.95"/><path d="M74 79.5H880.5V583.5H74" stroke="#6a6a6a" stroke-width="1" fill="none"/><path d="M75 79V584" stroke="#000" stroke-width="2"/></svg>
<div style="position:absolute;right:974.5px;top:73.34px;font-family:'Liberation Sans',sans-serif;font-size:12px;line-height:12px;font-weight:400;color:#000;white-space:nowrap;">+40</div>
<div style="position:absolute;right:974.5px;top:98.54px;font-family:'Liberation Sans',sans-serif;font-size:12px;line-height:12px;font-weight:400;color:#000;white-space:nowrap;">+30</div>
<div style="position:absolute;right:974.5px;top:123.74px;font-family:'Liberation Sans',sans-serif;font-size:12px;line-height:12px;font-weight:400;color:#000;white-space:nowrap;">+20</div>
<div style="position:absolute;right:974.5px;top:148.94px;font-family:'Liberation Sans',sans-serif;font-size:12px;line-height:12px;font-weight:400;color:#000;white-space:nowrap;">+10</div>
<div style="position:absolute;right:974.5px;top:174.14px;font-family:'Liberation Sans',sans-serif;font-size:12px;line-height:12px;font-weight:400;color:#000;white-space:nowrap;">0</div>
<div style="position:absolute;right:974.5px;top:199.34px;font-family:'Liberation Sans',sans-serif;font-size:12px;line-height:12px;font-weight:400;color:#000;white-space:nowrap;">-10</div>
<div style="position:absolute;right:974.5px;top:224.54px;font-family:'Liberation Sans',sans-serif;font-size:12px;line-height:12px;font-weight:400;color:#000;white-space:nowrap;">-20</div>
<div style="position:absolute;right:974.5px;top:249.74px;font-family:'Liberation Sans',sans-serif;font-size:12px;line-height:12px;font-weight:400;color:#000;white-space:nowrap;">-30</div>
<div style="position:absolute;right:974.5px;top:274.94px;font-family:'Liberation Sans',sans-serif;font-size:12px;line-height:12px;font-weight:400;color:#000;white-space:nowrap;">-40</div>
<div style="position:absolute;right:974.5px;top:300.14px;font-family:'Liberation Sans',sans-serif;font-size:12px;line-height:12px;font-weight:400;color:#000;white-space:nowrap;">-50</div>
<div style="position:absolute;right:974.5px;top:325.34px;font-family:'Liberation Sans',sans-serif;font-size:12px;line-height:12px;font-weight:400;color:#000;white-space:nowrap;">-60</div>
<div style="position:absolute;right:974.5px;top:350.54px;font-family:'Liberation Sans',sans-serif;font-size:12px;line-height:12px;font-weight:400;color:#000;white-space:nowrap;">-70</div>
<div style="position:absolute;right:974.5px;top:375.74px;font-family:'Liberation Sans',sans-serif;font-size:12px;line-height:12px;font-weight:400;color:#000;white-space:nowrap;">-80</div>
<div style="position:absolute;right:974.5px;top:400.94px;font-family:'Liberation Sans',sans-serif;font-size:12px;line-height:12px;font-weight:400;color:#000;white-space:nowrap;">-90</div>
<div style="position:absolute;right:974.5px;top:426.14px;font-family:'Liberation Sans',sans-serif;font-size:12px;line-height:12px;font-weight:400;color:#000;white-space:nowrap;">-100</div>
<div style="position:absolute;right:974.5px;top:451.34px;font-family:'Liberation Sans',sans-serif;font-size:12px;line-height:12px;font-weight:400;color:#000;white-space:nowrap;">-110</div>
<div style="position:absolute;right:974.5px;top:476.54px;font-family:'Liberation Sans',sans-serif;font-size:12px;line-height:12px;font-weight:400;color:#000;white-space:nowrap;">-120</div>
<div style="position:absolute;right:974.5px;top:501.74px;font-family:'Liberation Sans',sans-serif;font-size:12px;line-height:12px;font-weight:400;color:#000;white-space:nowrap;">-130</div>
<div style="position:absolute;right:974.5px;top:526.94px;font-family:'Liberation Sans',sans-serif;font-size:12px;line-height:12px;font-weight:400;color:#000;white-space:nowrap;">-140</div>
<div style="position:absolute;right:974.5px;top:552.14px;font-family:'Liberation Sans',sans-serif;font-size:12px;line-height:12px;font-weight:400;color:#000;white-space:nowrap;">-150</div>
<div style="position:absolute;right:974.5px;top:577.34px;font-family:'Liberation Sans',sans-serif;font-size:12px;line-height:12px;font-weight:400;color:#000;white-space:nowrap;">-160</div>
<div style="position:absolute;left:74.0px;top:587.84px;font-family:'Liberation Sans',sans-serif;font-size:12px;line-height:12px;font-weight:400;color:#000;white-space:nowrap;transform:translateX(-50%);">20</div>
<div style="position:absolute;left:121.30985159962637px;top:587.84px;font-family:'Liberation Sans',sans-serif;font-size:12px;line-height:12px;font-weight:400;color:#000;white-space:nowrap;transform:translateX(-50%);">30</div>
<div style="position:absolute;left:180.9132156632208px;top:587.84px;font-family:'Liberation Sans',sans-serif;font-size:12px;line-height:12px;font-weight:400;color:#000;white-space:nowrap;transform:translateX(-50%);">50</div>
<div style="position:absolute;left:261.7899411649437px;top:587.84px;font-family:'Liberation Sans',sans-serif;font-size:12px;line-height:12px;font-weight:400;color:#000;white-space:nowrap;transform:translateX(-50%);">100</div>
<div style="position:absolute;left:342.6666666666667px;top:587.84px;font-family:'Liberation Sans',sans-serif;font-size:12px;line-height:12px;font-weight:400;color:#000;white-space:nowrap;transform:translateX(-50%);">200</div>
<div style="position:absolute;left:389.97651826629306px;top:587.84px;font-family:'Liberation Sans',sans-serif;font-size:12px;line-height:12px;font-weight:400;color:#000;white-space:nowrap;transform:translateX(-50%);">300</div>
<div style="position:absolute;left:449.5798823298874px;top:587.84px;font-family:'Liberation Sans',sans-serif;font-size:12px;line-height:12px;font-weight:400;color:#000;white-space:nowrap;transform:translateX(-50%);">500</div>
<div style="position:absolute;left:530.4566078316104px;top:587.84px;font-family:'Liberation Sans',sans-serif;font-size:12px;line-height:12px;font-weight:400;color:#000;white-space:nowrap;transform:translateX(-50%);">1k</div>
<div style="position:absolute;left:611.3333333333334px;top:587.84px;font-family:'Liberation Sans',sans-serif;font-size:12px;line-height:12px;font-weight:400;color:#000;white-space:nowrap;transform:translateX(-50%);">2k</div>
<div style="position:absolute;left:658.6431849329597px;top:587.84px;font-family:'Liberation Sans',sans-serif;font-size:12px;line-height:12px;font-weight:400;color:#000;white-space:nowrap;transform:translateX(-50%);">3k</div>
<div style="position:absolute;left:718.246548996554px;top:587.84px;font-family:'Liberation Sans',sans-serif;font-size:12px;line-height:12px;font-weight:400;color:#000;white-space:nowrap;transform:translateX(-50%);">5k</div>
<div style="position:absolute;left:799.123274498277px;top:587.84px;font-family:'Liberation Sans',sans-serif;font-size:12px;line-height:12px;font-weight:400;color:#000;white-space:nowrap;transform:translateX(-50%);">10k</div>
<div style="position:absolute;left:880.0px;top:587.84px;font-family:'Liberation Sans',sans-serif;font-size:12px;line-height:12px;font-weight:400;color:#000;white-space:nowrap;transform:translateX(-50%);">20k</div>
<div style="position:absolute;left:477px;top:599.92px;font-family:'Liberation Sans',sans-serif;font-size:11.9px;line-height:11.9px;font-weight:400;color:#000;white-space:nowrap;transform:translateX(-50%);">Frequency (Hz)</div>
<div style="position:absolute;left:466.5px;top:65.8px;font:700 11.5px/11.5px 'Liberation Serif',serif;color:#000;white-space:nowrap;transform:scaleX(0.82);transform-origin:0 0">FFT</div>
<div style="position:absolute;left:31px;top:360px;transform:rotate(-90deg);transform-origin:0 0;font:400 11px/11px 'Liberation Sans',sans-serif;color:#000;white-space:nowrap">Level (dBV)</div>
<svg style="position:absolute;left:32px;top:290px" width="10" height="10"><path d="M0 1H8" stroke="#000" stroke-width="2"/><path d="M1 4H7L4 7.5Z" fill="#000"/></svg>
<div style="position:absolute;left:37px;top:630.26px;font-family:'Liberation Sans',sans-serif;font-size:11.5px;line-height:11.5px;font-weight:400;color:#000;white-space:nowrap;">FFT Length:</div>
<div style="position:absolute;left:111px;top:624px;width:60px;height:23px;background:#e1e1e1;border:1px solid #adadad"></div>
<div style="position:absolute;left:115px;top:629.84px;font-family:'Liberation Sans',sans-serif;font-size:12px;line-height:12px;font-weight:400;color:#000;white-space:nowrap;">32K</div>
<svg style="position:absolute;left:154px;top:632px" width="11" height="7"><path d="M1 1 L5.5 5.5 L10 1" stroke="#444" stroke-width="1.1" fill="none"/></svg>
<div style="position:absolute;left:182px;top:629.42px;font-family:'Liberation Sans',sans-serif;font-size:12.5px;line-height:12.5px;font-weight:400;color:#000;white-space:nowrap;">Window:</div>
<div style="position:absolute;left:241px;top:624px;width:191px;height:23px;background:#e1e1e1;border:1px solid #adadad"></div>
<div style="position:absolute;left:245px;top:629.75px;font-family:'Liberation Sans',sans-serif;font-size:12.1px;line-height:12.1px;font-weight:400;color:#000;white-space:nowrap;">AP-Equiripple</div>
<svg style="position:absolute;left:415px;top:632px" width="11" height="7"><path d="M1 1 L5.5 5.5 L10 1" stroke="#444" stroke-width="1.1" fill="none"/></svg>
<div style="position:absolute;left:442.5px;top:629.50px;font-family:'Liberation Sans',sans-serif;font-size:12.4px;line-height:12.4px;font-weight:400;color:#000;white-space:nowrap;">Averages:</div>
<div style="position:absolute;left:506px;top:624px;width:70px;height:23px;background:#ffffff;border:1px solid #7a7a7a"></div>
<div style="position:absolute;left:510px;top:628.84px;font-family:'Liberation Sans',sans-serif;font-size:12px;line-height:12px;font-weight:400;color:#000;white-space:nowrap;">1</div>
<div style="position:absolute;left:560px;top:625px;width:15px;height:21px;background:#f0f0f0;border-left:1px solid #d0d0d0"></div>
<div style="position:absolute;left:560px;top:635px;width:15px;height:1px;background:#cfcfcf;"></div>
<svg style="position:absolute;left:564px;top:627px" width="8" height="18"><path d="M0.5 4.5 L4 1 L7.5 4.5Z M0.5 12.5 L4 16 L7.5 12.5Z" fill="#333"/></svg>
<div style="position:absolute;left:583px;top:628px;width:13px;height:13px;background:#ffffff;border:1px solid #333"></div>
<div style="position:absolute;left:602px;top:628.92px;font-family:'Liberation Sans',sans-serif;font-size:11.9px;line-height:11.9px;font-weight:400;color:#000;white-space:nowrap;">Show Residual</div>
<div style="position:absolute;left:692px;top:624px;width:73px;height:23px;background:#e1e1e1;border:1px solid #adadad"></div>
<div style="position:absolute;left:728.5px;top:629.84px;font-family:'Liberation Sans',sans-serif;font-size:12px;line-height:12px;font-weight:400;color:#000;white-space:nowrap;transform:translateX(-50%);">Reset</div>
<div style="position:absolute;left:911px;top:79px;width:117px;height:43px;background:#ffffff;border:1px solid #000"></div>
<div style="position:absolute;left:912px;top:80px;width:115px;height:21px;background:#2d7db6;"></div>
<div style="position:absolute;left:961.5px;top:83.84px;font-family:'Liberation Sans',sans-serif;font-size:12px;line-height:12px;font-weight:700;color:#ffffff;white-space:nowrap;transform:translateX(-50%);">Data</div>
<svg style="position:absolute;left:1013px;top:84px" width="13" height="9"><path d="M0 4.5 H5" stroke="#fff" stroke-width="1.2"/><rect x="5.5" y="2" width="6" height="5" fill="none" stroke="#fff" stroke-width="1.2"/><path d="M5.5 0.5 V8.5" stroke="#fff" stroke-width="1.2"/></svg>
<div style="position:absolute;left:914px;top:103px;width:13px;height:13px;background:#ffffff;border:1px solid #333"></div>
<svg style="position:absolute;left:914px;top:103px" width="13" height="13"><path d="M2.5 6.5 L5 9.5 L10.5 3" stroke="#333" stroke-width="1.2" fill="none"/></svg>
<div style="position:absolute;left:931px;top:104px;width:12px;height:12px;background:#c42020;"></div>
<div style="position:absolute;left:947px;top:104.84px;font-family:'Liberation Sans',sans-serif;font-size:12px;line-height:12px;font-weight:400;color:#000;white-space:nowrap;">Ch2</div>
<svg style="position:absolute;left:840px;top:84px" width="40" height="30" viewBox="0 0 40 30"><path d="M13 3.2 C24 2 32.5 6 32 14.5 C31.5 22 22 26 10 25.7 C21 24.5 30 20.5 30 14.5 C30 8 22 4.5 13 3.2 Z" fill="#1a6cc0"/><text x="6.2" y="20" font-family="Liberation Sans" font-weight="700" font-style="italic" font-size="13.5" fill="#0d2f5a" stroke="#0d2f5a" stroke-width="0.5" letter-spacing="-0.3">AP</text></svg>
<svg style="position:absolute;left:0;top:0" width="1044" height="923"><g transform="translate(879 865.5)"><path d="M0 2.5H15 M2 2.5V28 M6.5 9.5H11V26H6.5Z M20 0V4 M13 4.5H29 M19 9V24Q19 28 15 28" stroke="#fff" stroke-width="6.8" fill="none" stroke-linejoin="round" stroke-linecap="round"/></g><g transform="translate(911 865.5)"><path d="M0 2.5H29 M2.5 2.5V28 M10 11H27V27H10Z" stroke="#fff" stroke-width="6.8" fill="none" stroke-linejoin="round" stroke-linecap="round"/></g><g transform="translate(943 865.5)"><path d="M2 3V26H8 M8 0V28 M13 5H28 M16 0V5 M14 5L28 28 M26 10L13 28" stroke="#fff" stroke-width="6.8" fill="none" stroke-linejoin="round" stroke-linecap="round"/></g><g transform="translate(974 865.5)"><path d="M15 0V3 M3 5H27 M9 8L11 11 M21 8L19 11 M0 13H30 M5 18H25V27H5Z M5 22.5H25" stroke="#fff" stroke-width="6.8" fill="none" stroke-linejoin="round" stroke-linecap="round"/></g><g transform="translate(1005 865.5)"><path d="M6 0V29 M0 7.5H12 M6 12L1 22 M16 3H25V24Q25 28 29 28 M16 3V20Q16 26 11 28" stroke="#fff" stroke-width="6.8" fill="none" stroke-linejoin="round" stroke-linecap="round"/></g><g transform="translate(879 865.5)"><path d="M0 2.5H15 M2 2.5V28 M6.5 9.5H11V26H6.5Z M20 0V4 M13 4.5H29 M19 9V24Q19 28 15 28" stroke="#0d3b7c" stroke-width="4" fill="none" stroke-linejoin="miter" stroke-linecap="butt"/></g><g transform="translate(911 865.5)"><path d="M0 2.5H29 M2.5 2.5V28 M10 11H27V27H10Z" stroke="#0d3b7c" stroke-width="4" fill="none" stroke-linejoin="miter" stroke-linecap="butt"/></g><g transform="translate(943 865.5)"><path d="M2 3V26H8 M8 0V28 M13 5H28 M16 0V5 M14 5L28 28 M26 10L13 28" stroke="#0d3b7c" stroke-width="4" fill="none" stroke-linejoin="miter" stroke-linecap="butt"/></g><g transform="translate(974 865.5)"><path d="M15 0V3 M3 5H27 M9 8L11 11 M21 8L19 11 M0 13H30 M5 18H25V27H5Z M5 22.5H25" stroke="#0d3b7c" stroke-width="4" fill="none" stroke-linejoin="miter" stroke-linecap="butt"/></g><g transform="translate(1005 865.5)"><path d="M6 0V29 M0 7.5H12 M6 12L1 22 M16 3H25V24Q25 28 29 28 M16 3V20Q16 26 11 28" stroke="#0d3b7c" stroke-width="4" fill="none" stroke-linejoin="miter" stroke-linecap="butt"/></g></svg>
<div style="position:absolute;left:879px;top:900.5px;font:700 14px/16px 'Liberation Sans',sans-serif;color:#0d3b7c;white-space:nowrap;transform:scaleX(1.17);transform-origin:0 0;-webkit-text-stroke:0;text-shadow:1px 0 #fff,-1px 0 #fff,0 1px #fff,0 -1px #fff,1px 1px #fff,-1px -1px #fff,1px -1px #fff,-1px 1px #fff">www.crystalradio.cn</div>
</body></html>
